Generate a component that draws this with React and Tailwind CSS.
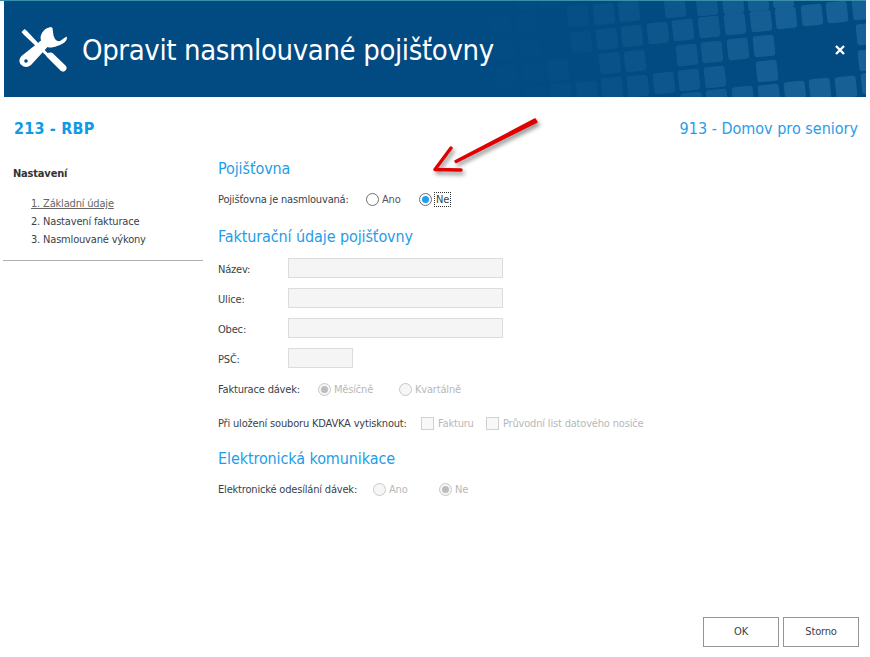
import React from 'react';

// header background tiles [centre x, centre y]
const tiles = [
  [500, 25], [504, 49], [507, 76], [525, 0], [527, 23], [530, 48], [533, 73], [536, 97], [550, -2], [558, 70], [561, 94],
  [578, 16], [581, 42], [587, 92], [604, 14], [607, 39], [610, 63], [612, 88], [629, 11], [632, 36], [635, 61], [638, 86],
  [658, 33], [664, 83], [675, 7], [683, 30], [687, 55], [689, 80], [692, 103], [707, 5], [709, 27], [712, 52], [715, 77],
  [717, 100], [733, 3], [735, 24], [738, 49], [743, 97], [758, 0], [761, 21], [764, 46], [767, 71], [769, 95], [783, -3],
  [786, 18], [795, 92], [812, 15], [820, 89], [837, 12], [846, 87], [863, 9], [867, 34], [869, 60], [872, 83],
];

const HeaderTiles = () => (
  <svg className="absolute left-0 top-0" width="862" height="96" viewBox="4 1 862 96">
    {tiles.map(([x, y]) => (
      <rect
        key={`${x}-${y}`}
        x={x - 10.5}
        y={y - 10.5}
        width="21"
        height="21"
        rx="3"
        fill="#5fb0e0"
        opacity={Math.min(0.22, Math.max(0.02, ((x - 510) / 280) * 0.22))}
        transform={`rotate(-6 ${x} ${y})`}
      />
    ))}
  </svg>
);

const ToolsIcon = () => (
  <svg className="absolute left-[10px] top-[17px]" width="60" height="60" viewBox="0 0 60 60">
    <path
      fill="#fff"
      d="M37 9 C31 10 27 14 26.5 20 L27 22.5 L7.5 38 C4.5 41 5 45 7.5 47 C10 49.5 14 49.5 17 47 L33.5 29 C36 30 39.5 29.5 43 28 C48 26.5 52.5 24 53 20 L52.5 18.5 L46 23 C44 23.5 42 22.5 41 21 L39.5 17.5 L38.5 10 Z"
    />
    <path
      fill="#fff"
      d="M7.5 14 L10.5 11 L13 13 L33.5 35 C36 34 38 34.5 39 35.5 L51.5 47.5 C53 49 53 51 51.5 52.5 C50 54 48 54 46.5 52.5 L35 41 C33.5 39.5 32.5 38.5 31.5 37 L10 17 Z"
    />
    <circle cx="12" cy="43" r="1.8" fill="#024a82" />
  </svg>
);

const Radio = ({ checked, disabled }) => (
  <span
    className={`w-[13px] h-[13px] rounded-full border flex items-center justify-center shrink-0 ${
      disabled ? 'border-[#c8c8c8] bg-[#f6f6f6]' : 'border-[#6e6e6e] bg-white'
    }`}
  >
    {checked && <span className={`w-[7px] h-[7px] rounded-full ${disabled ? 'bg-[#bcbcbc]' : 'bg-[#1e9df2]'}`} />}
  </span>
);

const Check = () => <span className="w-[13px] h-[13px] border border-[#d0d0d0] bg-[#f8f8f8] shrink-0" />;

const Field = ({ label, width }) => (
  <div className="flex items-center h-5">
    <span className="w-[70px] pt-1">{label}</span>
    <span className={`h-5 border border-[#dcdcdc] bg-[#f5f5f5] ${width}`} />
  </div>
);

const Heading = ({ children, className }) => (
  <h2 className={`h-6 leading-[26px] text-[16px] tracking-[-0.1px] text-[#1f9ce9] ${className}`}>{children}</h2>
);

const App = () => {
  return (
    <div className="relative w-[870px] h-[657px] flex flex-col overflow-hidden bg-white text-[11px] tracking-[-0.18px] text-[#3a3f4a] font-['DejaVu_Sans_Condensed','DejaVu_Sans',sans-serif] [font-stretch:condensed]">
      <div className="w-[866px] h-px bg-[#3a90a8]" />

      {/* Header */}
      <div className="relative ml-1 w-[862px] h-24 bg-[#024a82] overflow-hidden">
        <HeaderTiles />
        <ToolsIcon />
        <h1 className="absolute left-[78px] top-[29px] text-[29px] leading-[40px] tracking-[-0.37px] text-white whitespace-nowrap">
          Opravit nasmlouvané pojišťovny
        </h1>
        <svg className="absolute left-[830px] top-[43px]" width="12" height="12" viewBox="0 0 12 12">
          <path d="M2 2 L10 10 M10 2 L2 10" stroke="#fff" strokeWidth="2.4" />
        </svg>
      </div>

      {/* Subheader */}
      <div className="flex justify-between pt-[19px] pl-[14px] pr-3 text-[16px] tracking-normal leading-[26px] h-[43px]">
        <span className="font-bold tracking-[0.2px] text-[#0f9ae6]">213 - RBP</span>
        <span className="text-[#2a9ce8]">913 - Domov pro seniory</span>
      </div>

      {/* Main */}
      <div className="flex flex-1 min-h-0">
        <aside className="ml-[3px] w-[200px] h-[121px] pt-[25px] border-b border-[#b0b0b0] shrink-0">
          <div className="pl-[10px] h-4 leading-[18px] font-bold text-[#333]">Nastavení</div>
          <ul className="mt-[13px] pl-7">
            <li className="h-[18px] leading-5 underline text-[#666]">1. Základní údaje</li>
            <li className="h-[18px] leading-5">2. Nastavení fakturace</li>
            <li className="h-[18px] leading-5">3. Nasmlouvané výkony</li>
          </ul>
        </aside>

        <div className="ml-[15px] pt-4 flex-1">
          <Heading>Pojišťovna</Heading>
          <div className="mt-[9px] flex items-center h-5">
            <span className="w-[148px] pt-[2px]">Pojišťovna je nasmlouvaná:</span>
            <Radio />
            <span className="ml-[3px] w-[37px] pt-[2px] text-[#555]">Ano</span>
            <Radio checked />
            <span className="ml-[2px] px-px border border-dotted border-[#333] leading-[13px]">Ne</span>
          </div>

          <Heading className="mt-[15px]">Fakturační údaje pojišťovny</Heading>
          <div className="mt-[10px] flex flex-col gap-[10px]">
            <Field label="Název:" width="w-[215px]" />
            <Field label="Ulice:" width="w-[215px]" />
            <Field label="Obec:" width="w-[215px]" />
            <Field label="PSČ:" width="w-[65px]" />
          </div>

          <div className="mt-[11px] flex items-center h-5 text-[#b8b8b8]">
            <span className="w-[100px] pt-[2px] text-[#3a3f4a]">Fakturace dávek:</span>
            <Radio checked disabled />
            <span className="ml-[3px] w-[65px] pt-[2px]">Měsíčně</span>
            <Radio disabled />
            <span className="ml-[3px] pt-[2px]">Kvartálně</span>
          </div>

          <div className="mt-[14px] flex items-center h-5 text-[#b8b8b8]">
            <span className="w-[203px] pt-[2px] text-[#3a3f4a]">Při uložení souboru KDAVKA vytisknout:</span>
            <Check />
            <span className="ml-1 w-[48px] pt-[2px]">Fakturu</span>
            <Check />
            <span className="ml-1 pt-[2px]">Průvodní list datového nosiče</span>
          </div>

          <Heading className="mt-[13px]">Elektronická komunikace</Heading>
          <div className="mt-[9px] flex items-center h-5 text-[#b8b8b8]">
            <span className="w-[155px] pt-[2px] text-[#3a3f4a]">Elektronické odesílání dávek:</span>
            <Radio disabled />
            <span className="ml-[3px] w-[50px] pt-[2px]">Ano</span>
            <Radio checked disabled />
            <span className="ml-[3px] pt-[2px]">Ne</span>
          </div>
        </div>
      </div>

      {/* Footer */}
      <div className="flex justify-end gap-1 pr-[11px] pb-[10px]">
        <button className="w-[76px] h-[30px] border border-[#959595] bg-white">OK</button>
        <button className="w-[76px] h-[30px] border border-[#959595] bg-white">Storno</button>
      </div>

      {/* Red arrow annotation */}
      <svg
        className="absolute left-[425px] top-[110px] drop-shadow-[2px_3px_2px_rgba(0,0,0,0.45)]"
        width="125"
        height="70"
        viewBox="0 0 125 70"
      >
        <path d="M30 51 L110 9 L112 12 L31 52.5 Z" fill="#e00000" stroke="#e00000" strokeWidth="1.5" strokeLinejoin="round" />
        <path d="M26 38 L10 59.5 L36 60" fill="none" stroke="#e00000" strokeWidth="3.4" strokeLinecap="round" strokeLinejoin="round" />
      </svg>
    </div>
  );
};

export default App;
